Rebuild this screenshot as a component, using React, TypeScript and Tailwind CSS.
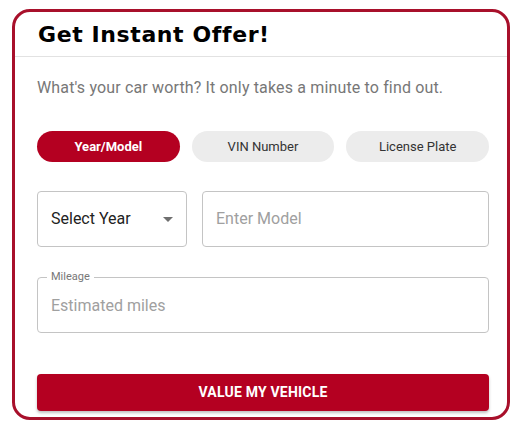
import React from "react";

export default function App() {
  return (
    <div className="w-[521px] h-[429px] bg-white pt-[9px] pl-[12px]" style={{ fontFamily: "Roboto, 'Liberation Sans', sans-serif" }}>
      <div className="w-[498px] h-[411px] border-[3px] border-[#a8102b] rounded-[18px] flex flex-col overflow-hidden">
        <div className="h-[45px] border-b border-[#e2e2e2] pl-[23px] flex items-center">
          <h1 className="text-[22px] font-bold text-black tracking-[0.6px] leading-none pt-[2px]" style={{ fontFamily: "'DejaVu Sans', Verdana, sans-serif" }}>
            Get Instant Offer!
          </h1>
        </div>
        <div className="pl-[22px] pr-[18px] flex flex-col">
          <p className="mt-[21px] text-[16px] text-[#777] leading-[20px] tracking-[0.15px]">
            What's your car worth? It only takes a minute to find out.
          </p>
          <div className="mt-[33px] grid grid-cols-3 gap-[12px]">
            <button className="h-[31px] rounded-full bg-[#b40021] text-white text-[13px] font-bold">Year/Model</button>
            <button className="h-[31px] rounded-full bg-[#ececec] text-[#333] text-[13px]">VIN Number</button>
            <button className="h-[31px] rounded-full bg-[#ececec] text-[#333] text-[13px]">License Plate</button>
          </div>
          <div className="mt-[29px] flex gap-[15px]">
            <div className="w-[150px] h-[56px] border border-[#c4c4c4] rounded-[4px] flex items-center justify-between pl-[13px] pr-[13px]">
              <span className="text-[16px] text-[#222]">Select Year</span>
              <svg width="10" height="5" viewBox="0 0 10 5"><path d="M0 0 L10 0 L5 5 Z" fill="#6f6f6f" /></svg>
            </div>
            <div className="flex-1 h-[56px] border border-[#c4c4c4] rounded-[4px] flex items-center pl-[13px]">
              <span className="text-[16px] text-[#a0a0a0]">Enter Model</span>
            </div>
          </div>
          <div className="mt-[30px] relative h-[56px] border border-[#c4c4c4] rounded-[4px] flex items-center pl-[13px] pt-[1px]">
            <span className="absolute left-[9px] top-[-8px] bg-white px-[4px] text-[11px] leading-[14px] text-[#777]">Mileage</span>
            <span className="text-[16px] text-[#a0a0a0]">Estimated miles</span>
          </div>
          <button className="mt-[41px] h-[37px] rounded-[4px] bg-[#b40021] text-white text-[14px] font-bold tracking-[0.2px] shadow-[0_2px_3px_rgba(0,0,0,0.25)]">
            VALUE MY VEHICLE
          </button>
        </div>
      </div>
    </div>
  );
}
